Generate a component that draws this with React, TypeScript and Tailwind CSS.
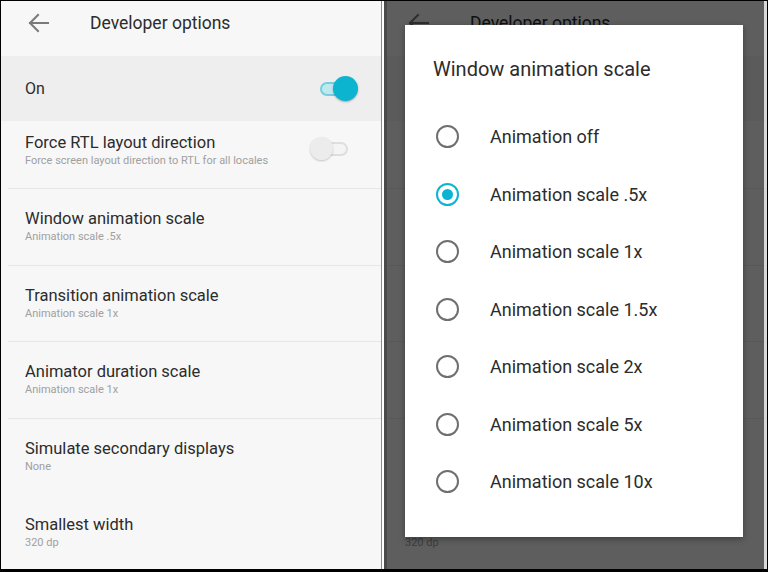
import React from "react";

const font = { fontFamily: "Roboto, 'Noto Sans', Arial, sans-serif" };

const rows = [
  { title: "Window animation scale", sub: "Animation scale .5x", line: true },
  { title: "Transition animation scale", sub: "Animation scale 1x", line: true },
  { title: "Animator duration scale", sub: "Animation scale 1x", line: true },
  { title: "Simulate secondary displays", sub: "None", line: true },
  { title: "Smallest width", sub: "320 dp", line: false },
];

const options = [
  "Animation off",
  "Animation scale .5x",
  "Animation scale 1x",
  "Animation scale 1.5x",
  "Animation scale 2x",
  "Animation scale 5x",
  "Animation scale 10x",
];

const BackArrow = () => (
  <svg width="22" height="20" viewBox="0 0 22 20" fill="none" stroke="#7a7a7a" strokeWidth="2" strokeLinecap="square">
    <path d="M2 10H20" />
    <path d="M10 2L2 10L10 18" />
  </svg>
);

// settings screen, used twice (second one sits under the dialog)
const Settings = ({ dim }: { dim?: boolean }) => (
  <div className={dim ? "relative flex-1 h-full bg-[#f7f7f7] overflow-hidden -ml-[6px]" : "relative flex-1 h-full bg-[#f7f7f7] overflow-hidden"}>
    {/* Toolbar */}
    <div className="h-[55px] flex items-start pt-[11px]">
      <div className="w-[89px] pl-[27px] pt-px flex items-center">
        <BackArrow />
      </div>
      <span className="text-[17.5px] leading-[22px] text-[#2c2c2c]">Developer options</span>
    </div>

    {/* Master switch */}
    <div className="h-[65px] bg-[#eeeeee] flex items-center justify-between pl-[24px] pr-[23px]">
      <span className="text-[16px] text-[#2c2c2c]">On</span>
      <div className="relative w-[38px] h-[26px] flex items-center">
        <div className="w-[34px] h-[14px] rounded-full border-2 border-[#74cfe0] bg-[#bfe9f1]" />
        <div className="absolute right-0 top-0 w-[25px] h-[25px] rounded-full bg-[#0db4d0] shadow-[0_1px_2px_rgba(0,0,0,0.3)]" />
      </div>
    </div>

    {/* Force RTL */}
    <div className="h-[67px] flex items-start justify-between pl-[24px] pr-[33px] pt-[11px]">
      <div className="flex flex-col">
        <span className="text-[16.5px] leading-[22px] text-[#2c2c2c]">Force RTL layout direction</span>
        <span className="text-[11px] leading-[14px] text-[#a0a0a0]">Force screen layout direction to RTL for all locales</span>
      </div>
      <div className="relative w-[38px] h-[24px] mt-[5px] flex items-center">
        <div className="ml-[2px] w-[36px] h-[14px] rounded-full border-2 border-[#dedede] bg-[#f4f4f4]" />
        <div className="absolute left-0 top-0 w-[23px] h-[23px] rounded-full bg-[#ececec] shadow-[0_1px_2px_rgba(0,0,0,0.2)]" />
      </div>
    </div>

    {rows.map((r) => (
      <div key={r.title} className="flex flex-col">
        <div className={r.line ? "h-px bg-[#e6e6e6] ml-[7px]" : "h-px"} />
        <div className="h-[75.5px] flex flex-col pl-[24px] pt-[19px]">
          <span className="text-[16.5px] leading-[22px] text-[#2c2c2c]">{r.title}</span>
          <span className="text-[11px] leading-[14px] text-[#a0a0a0]">{r.sub}</span>
        </div>
      </div>
    ))}

    {dim && <div className="absolute inset-0 bg-black/[0.62]" />}
  </div>
);

const Radio = ({ on }: { on: boolean }) =>
  on ? (
    <div className="w-[23px] h-[23px] rounded-full border-[2.5px] border-[#0db4d0] flex items-center justify-center">
      <div className="w-[11px] h-[11px] rounded-full bg-[#0db4d0]" />
    </div>
  ) : (
    <div className="w-[23px] h-[23px] rounded-full border-[2.5px] border-[#6f6f6f]" />
  );

export default function App() {
  return (
    <div className="w-[768px] h-[572px] bg-black pt-px pl-px pr-px pb-[3px] flex" style={font}>
      <Settings />

      {/* split between the two screenshots */}
      <div className="w-px bg-[#8a8a8a]" />
      <div className="w-[2px] bg-[#ffffff]" />
      <div className="w-[3px] bg-[#4a4a4a]" />

      <div className="relative flex-1 h-full flex overflow-hidden">
        <Settings dim />
        <div className="w-[3px] bg-[#d8d8d8]" />

        {/* dialog */}
        <div className="absolute left-[18px] top-[24px] w-[338px] h-[512px] bg-white shadow-[0_2px_6px_rgba(0,0,0,0.35)] flex flex-col">
          <div className="pl-[28px] pt-[30px] h-[83px] text-[20px] leading-[28px] text-[#2c2c2c]">Window animation scale</div>
          {options.map((o, i) => (
            <div key={o} className="h-[57.5px] flex items-center pl-[31px]">
              <Radio on={i === 1} />
              <span className="ml-[31px] text-[18px] text-[#2c2c2c]">{o}</span>
            </div>
          ))}
        </div>
      </div>
    </div>
  );
}
